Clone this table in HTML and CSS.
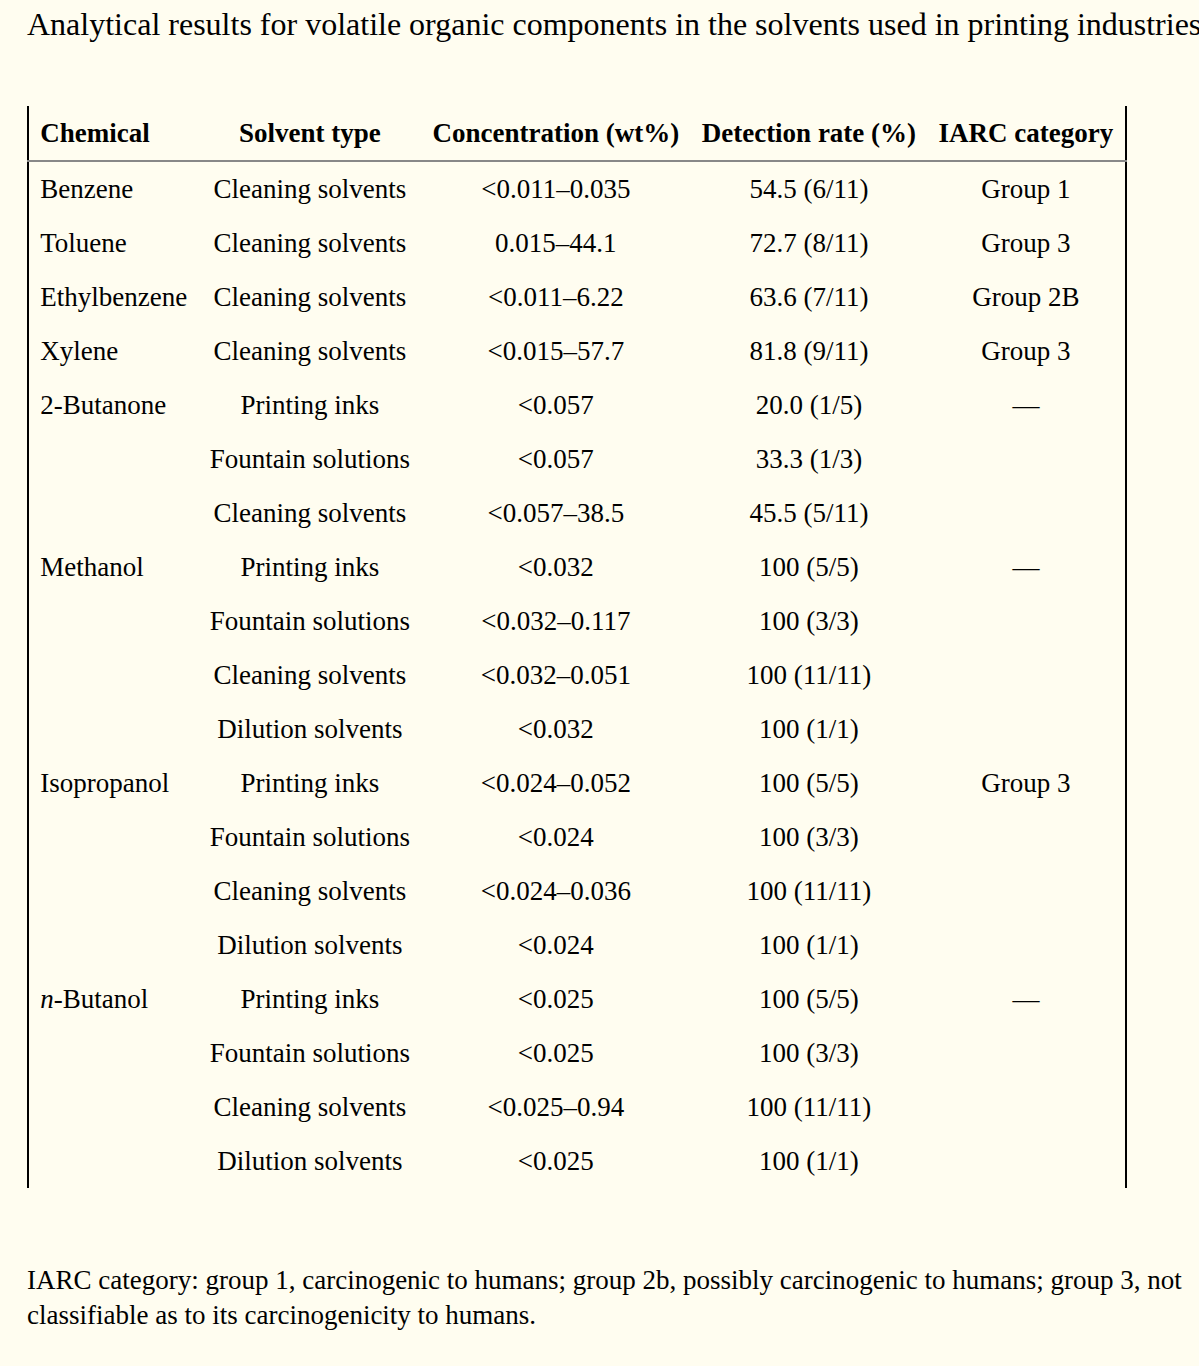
FILE: index.html
```html
<!DOCTYPE html>
<html>
<head>
<meta charset="utf-8">
<link rel="stylesheet" href="styles.css">
</head>
<body>
<h1 class="title">Analytical results for volatile organic components in the solvents used in printing industries</h1>
<table class="data">
<thead>
<tr><th class="left">Chemical</th><th>Solvent type</th><th>Concentration (wt%)</th><th>Detection rate (%)</th><th>IARC category</th></tr>
</thead>
<tbody>
<tr><td class="left">Benzene</td><td>Cleaning solvents</td><td>&lt;0.011–0.035</td><td>54.5 (6/11)</td><td>Group 1</td></tr>
<tr><td class="left">Toluene</td><td>Cleaning solvents</td><td>0.015–44.1</td><td>72.7 (8/11)</td><td>Group 3</td></tr>
<tr><td class="left">Ethylbenzene</td><td>Cleaning solvents</td><td>&lt;0.011–6.22</td><td>63.6 (7/11)</td><td>Group 2B</td></tr>
<tr><td class="left">Xylene</td><td>Cleaning solvents</td><td>&lt;0.015–57.7</td><td>81.8 (9/11)</td><td>Group 3</td></tr>
<tr><td class="left">2-Butanone</td><td>Printing inks</td><td>&lt;0.057</td><td>20.0 (1/5)</td><td>—</td></tr>
<tr><td class="left"></td><td>Fountain solutions</td><td>&lt;0.057</td><td>33.3 (1/3)</td><td></td></tr>
<tr><td class="left"></td><td>Cleaning solvents</td><td>&lt;0.057–38.5</td><td>45.5 (5/11)</td><td></td></tr>
<tr><td class="left">Methanol</td><td>Printing inks</td><td>&lt;0.032</td><td>100 (5/5)</td><td>—</td></tr>
<tr><td class="left"></td><td>Fountain solutions</td><td>&lt;0.032–0.117</td><td>100 (3/3)</td><td></td></tr>
<tr><td class="left"></td><td>Cleaning solvents</td><td>&lt;0.032–0.051</td><td>100 (11/11)</td><td></td></tr>
<tr><td class="left"></td><td>Dilution solvents</td><td>&lt;0.032</td><td>100 (1/1)</td><td></td></tr>
<tr><td class="left">Isopropanol</td><td>Printing inks</td><td>&lt;0.024–0.052</td><td>100 (5/5)</td><td>Group 3</td></tr>
<tr><td class="left"></td><td>Fountain solutions</td><td>&lt;0.024</td><td>100 (3/3)</td><td></td></tr>
<tr><td class="left"></td><td>Cleaning solvents</td><td>&lt;0.024–0.036</td><td>100 (11/11)</td><td></td></tr>
<tr><td class="left"></td><td>Dilution solvents</td><td>&lt;0.024</td><td>100 (1/1)</td><td></td></tr>
<tr><td class="left"><i>n</i>-Butanol</td><td>Printing inks</td><td>&lt;0.025</td><td>100 (5/5)</td><td>—</td></tr>
<tr><td class="left"></td><td>Fountain solutions</td><td>&lt;0.025</td><td>100 (3/3)</td><td></td></tr>
<tr><td class="left"></td><td>Cleaning solvents</td><td>&lt;0.025–0.94</td><td>100 (11/11)</td><td></td></tr>
<tr><td class="left"></td><td>Dilution solvents</td><td>&lt;0.025</td><td>100 (1/1)</td><td></td></tr>
</tbody>
</table>
<p class="note">IARC category: group 1, carcinogenic to humans; group 2b, possibly carcinogenic to humans; group 3, not classifiable as to its carcinogenicity to humans.</p>
</body>
</html>
```

FILE: styles.css
```css
html, body {
  background: #fffdf0;
}
body {
  margin: 0;
  padding: 0 0 0 27px;
  font-family: "Liberation Serif", "Times New Roman", serif;
  color: #000;
  overflow: hidden;
}
.title {
  margin: 0;
  padding-top: 5px;
  font-size: 32px;
  font-weight: normal;
  line-height: 38px;
  white-space: nowrap;
}
.data {
  margin-top: 63px;
  border-collapse: collapse;
  border-left: 2px solid #000;
  border-right: 2px solid #000;
  font-size: 27px;
  line-height: 30px;
}
.data th, .data td {
  padding: 12px 11.25px;
  text-align: center;
  white-space: nowrap;
}
.data th {
  font-weight: bold;
  border-bottom: 2px solid #888;
}
.data .left {
  text-align: left;
}
.note {
  margin: 75px 0 0 0;
  padding-right: 12px;
  font-size: 27px;
  line-height: 35px;
}
```
